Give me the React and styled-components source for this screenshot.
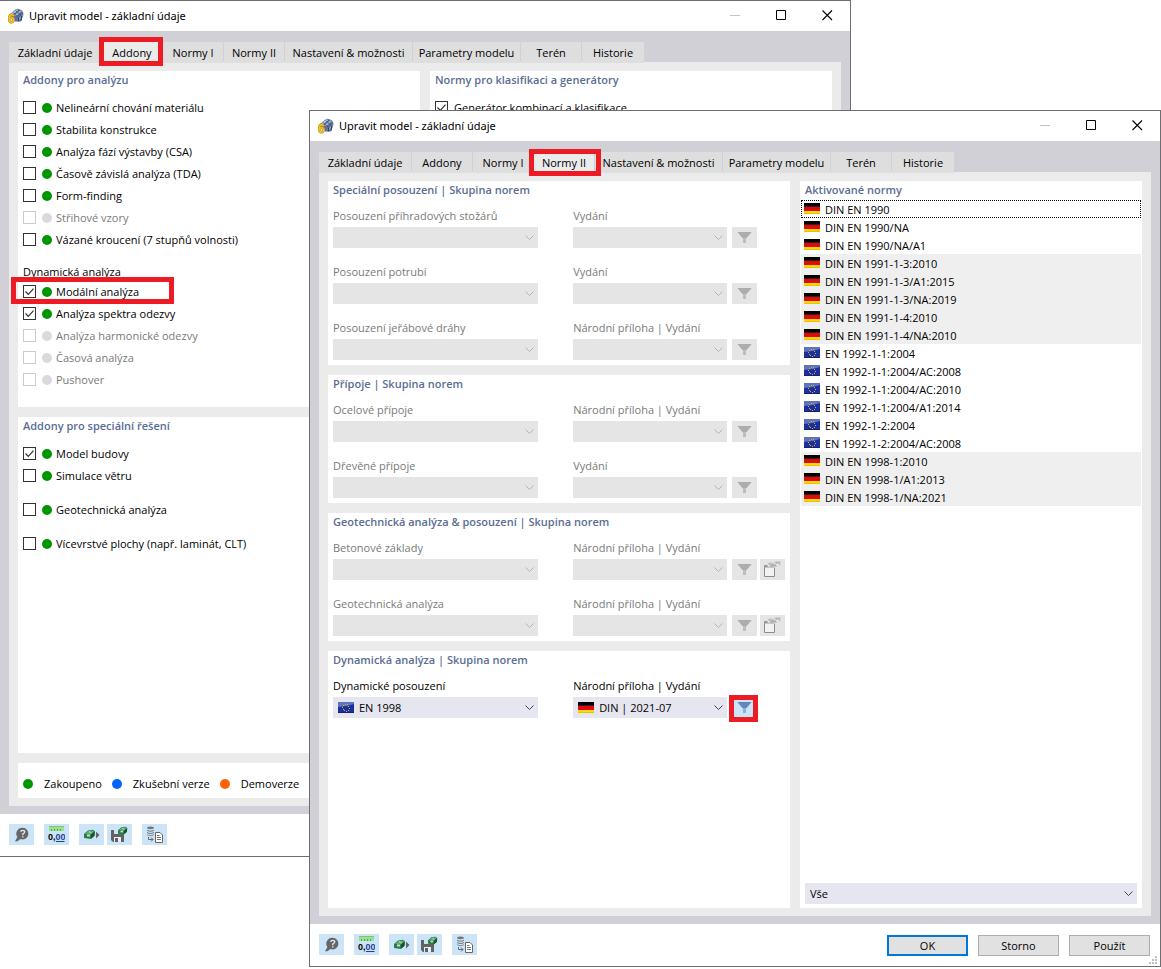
import React, { useId, useState } from 'react';
import styled, { createGlobalStyle, css } from 'styled-components';

const TABS = [
    { name: 'Základní údaje', width: 92 },
    { name: 'Addony', width: 60 },
    { name: 'Normy I', width: 60 },
    { name: 'Normy II', width: 60 },
    { name: 'Nastavení & možnosti', width: 127 },
    { name: 'Parametry modelu', width: 107 },
    { name: 'Terén', width: 60 },
    { name: 'Historie', width: 62 },
];

const NORMS = [
    ['de', 'DIN EN 1990'],
    ['de', 'DIN EN 1990/NA'],
    ['de', 'DIN EN 1990/NA/A1'],
    ['de', 'DIN EN 1991-1-3:2010', true],
    ['de', 'DIN EN 1991-1-3/A1:2015', true],
    ['de', 'DIN EN 1991-1-3/NA:2019', true],
    ['de', 'DIN EN 1991-1-4:2010', true],
    ['de', 'DIN EN 1991-1-4/NA:2010', true],
    ['eu', 'EN 1992-1-1:2004'],
    ['eu', 'EN 1992-1-1:2004/AC:2008'],
    ['eu', 'EN 1992-1-1:2004/AC:2010'],
    ['eu', 'EN 1992-1-1:2004/A1:2014'],
    ['eu', 'EN 1992-1-2:2004'],
    ['eu', 'EN 1992-1-2:2004/AC:2008'],
    ['de', 'DIN EN 1998-1:2010', true],
    ['de', 'DIN EN 1998-1/A1:2013', true],
    ['de', 'DIN EN 1998-1/NA:2021', true],
];

const App = () => (
    <Desktop>
        <GlobalStyle />
        <BackWindow>
            <AddonsDialog />
        </BackWindow>
        <FrontWindow>
            <NormsDialog />
        </FrontWindow>
    </Desktop>
);

const AddonsDialog = () => (
    <>
        <TitleBar />
        <Body>
            <TabBar active="Addony" inset="-5px -1px -3px -3px" />
            <Page $columns="1fr 1fr">
                <Column>
                    <Panel $grow>
                        <PanelTitle>Addony pro analýzu</PanelTitle>
                        <Rows>
                            <Addon label="Nelineární chování materiálu" />
                            <Addon label="Stabilita konstrukce" />
                            <Addon label="Analýza fází výstavby (CSA)" />
                            <Addon label="Časově závislá analýza (TDA)" />
                            <Addon label="Form-finding" />
                            <Addon label="Střihové vzory" disabled />
                            <Addon label="Vázané kroucení (7 stupňů volnosti)" />
                            <GroupLabel>Dynamická analýza</GroupLabel>
                            <Addon label="Modální analýza" checked marked />
                            <Addon label="Analýza spektra odezvy" checked />
                            <Addon label="Analýza harmonické odezvy" disabled />
                            <Addon label="Časová analýza" disabled />
                            <Addon label="Pushover" disabled />
                        </Rows>
                    </Panel>
                    <Panel $grow>
                        <PanelTitle>Addony pro speciální řešení</PanelTitle>
                        <Rows>
                            <Addon label="Model budovy" checked />
                            <Addon label="Simulace větru" />
                            <Addon label="Geotechnická analýza" spaced />
                            <Addon label="Vícevrstvé plochy (např. laminát, CLT)" spaced />
                        </Rows>
                    </Panel>
                    <Legend>
                        <LegendItem><Dot $color="#009600" />Zakoupeno</LegendItem>
                        <LegendItem><Dot $color="#0064ff" />Zkušební verze</LegendItem>
                        <LegendItem><Dot $color="#ff6400" />Demoverze</LegendItem>
                    </Legend>
                </Column>
                <Column>
                    <Panel $grow>
                        <PanelTitle>Normy pro klasifikaci a generátory</PanelTitle>
                        <Rows>
                            <Addon label="Generátor kombinací a klasifikace" checked plain />
                        </Rows>
                    </Panel>
                </Column>
            </Page>
        </Body>
        <Footer>
            <Toolbar />
        </Footer>
    </>
);

const NormsDialog = () => (
    <>
        <TitleBar />
        <Body>
            <TabBar active="Normy II" inset="-3px -7px -3px -5px" />
            <Page $columns="minmax(0, 1fr) 342px">
                <Column>
                    <Panel>
                        <PanelTitle>Speciální posouzení | Skupina norem</PanelTitle>
                        <Fields>
                            <NormField left="Posouzení příhradových stožárů" right="Vydání" disabled />
                            <NormField left="Posouzení potrubí" right="Vydání" disabled />
                            <NormField left="Posouzení jeřábové dráhy" right="Národní příloha | Vydání" disabled />
                        </Fields>
                    </Panel>
                    <Panel>
                        <PanelTitle>Přípoje | Skupina norem</PanelTitle>
                        <Fields>
                            <NormField left="Ocelové přípoje" right="Národní příloha | Vydání" disabled />
                            <NormField left="Dřevěné přípoje" right="Vydání" disabled />
                        </Fields>
                    </Panel>
                    <Panel>
                        <PanelTitle>Geotechnická analýza & posouzení | Skupina norem</PanelTitle>
                        <Fields>
                            <NormField left="Betonové základy" right="Národní příloha | Vydání" disabled library />
                            <NormField left="Geotechnická analýza" right="Národní příloha | Vydání" disabled library />
                        </Fields>
                    </Panel>
                    <Panel $grow>
                        <PanelTitle>Dynamická analýza | Skupina norem</PanelTitle>
                        <Fields>
                            <NormField
                                left="Dynamické posouzení"
                                right="Národní příloha | Vydání"
                                leftValue="EN 1998"
                                rightValue="DIN | 2021-07"
                            />
                        </Fields>
                    </Panel>
                </Column>
                <Panel>
                    <PanelTitle>Aktivované normy</PanelTitle>
                    <NormList>
                        {NORMS.map(([flag, name, shaded], i) => (
                            <NormItem key={name} $shaded={shaded} $focused={i === 0}>
                                <Flag code={flag} />
                                <NormName>{name}</NormName>
                            </NormItem>
                        ))}
                    </NormList>
                    <ListFilter>
                        <Dropdown value="Vše" label="Filtr norem" />
                    </ListFilter>
                </Panel>
            </Page>
        </Body>
        <Footer>
            <Toolbar />
            <Actions>
                <ActionButton $primary>OK</ActionButton>
                <ActionButton>Storno</ActionButton>
                <ActionButton>Použít</ActionButton>
            </Actions>
            <Grip viewBox="0 0 8 8">
                <path d="M6 0h2v2h-2zM3 3h2v2h-2zM6 3h2v2h-2zM0 6h2v2h-2zM3 6h2v2h-2zM6 6h2v2h-2z" />
            </Grip>
        </Footer>
    </>
);

const TitleBar = () => (
    <Title>
        <AppIcon />
        <TitleText>Upravit model - základní údaje</TitleText>
        <WindowButton aria-label="Minimalizovat">
            <svg width="11" height="11"><path d="M0 5.5h10" stroke="#c4c4c4" /></svg>
        </WindowButton>
        <WindowButton aria-label="Maximalizovat">
            <svg width="11" height="11"><path d="M.5 .5h9v9h-9z" fill="none" stroke="#000" /></svg>
        </WindowButton>
        <WindowButton aria-label="Zavřít">
            <svg width="11" height="11"><path d="M.5 .5l9.500 9.500M10 .5l-9.500 9.500" stroke="#000" strokeWidth="1.100" /></svg>
        </WindowButton>
    </Title>
);

const TabBar = ({ active, inset }) => (
    <TabList role="tablist">
        {TABS.map(({ name, width }) => (
            <Tab
                key={name}
                role="tab"
                aria-selected={name === active}
                $active={name === active}
                $width={width}
            >
                {name}
                {name === active && <Marker $inset={inset} />}
            </Tab>
        ))}
    </TabList>
);

const Addon = ({ label, checked = false, disabled, plain, spaced, marked }) => {
    const [on, setOn] = useState(checked);

    return (
        <AddonRow $disabled={disabled} $spaced={spaced}>
            <CheckWrapper>
                <Checkbox type="checkbox" checked={on} disabled={disabled} onChange={() => setOn(!on)} />
                {on && (
                    <CheckMark viewBox="0 0 13 13">
                        <path d="M2.500 6.500l2.800 2.800 5.200-5.600" />
                    </CheckMark>
                )}
            </CheckWrapper>
            {!plain && <Dot $color={disabled ? '#dadade' : '#009600'} />}
            {label}
            {marked && <Marker $inset="-4px auto -1px -12px" $width="163px" />}
        </AddonRow>
    );
};

const NormField = ({ left, right, leftValue, rightValue, disabled, library }) => {
    const id = useId();

    return (
        <FieldGrid>
            <FieldLabel htmlFor={`${id}-norm`} $disabled={disabled}>{left}</FieldLabel>
            <EditionLabel htmlFor={`${id}-edition`} $disabled={disabled}>{right}</EditionLabel>
            <Dropdown id={`${id}-norm`} value={leftValue} flag={leftValue && 'eu'} disabled={disabled} />
            <Edition>
                <Dropdown id={`${id}-edition`} value={rightValue} flag={rightValue && 'de'} disabled={disabled} />
            </Edition>
            <FieldButtons>
                <IconButton aria-label="Filtr" disabled={disabled}>
                    <FilterIcon disabled={disabled} />
                    {!disabled && <Marker $inset="-2px -1px -4px -3px" />}
                </IconButton>
                {library && (
                    <IconButton aria-label="Knihovna" disabled={disabled}>
                        <LibraryIcon />
                    </IconButton>
                )}
            </FieldButtons>
        </FieldGrid>
    );
};

const Dropdown = ({ id, value = '', flag, disabled, label }) => (
    <SelectWrapper>
        <Select id={id} aria-label={label} disabled={disabled} $flag={flag}>
            <option>{value}</option>
        </Select>
        {flag && <SelectFlag><Flag code={flag} /></SelectFlag>}
        <Chevron viewBox="0 0 9 6" $disabled={disabled}>
            <path d="M.5 .5l4 4 4-4" />
        </Chevron>
    </SelectWrapper>
);

const Toolbar = () => (
    <Tools>
        <ToolButton aria-label="Nápověda"><HelpIcon /></ToolButton>
        <ToolButton aria-label="Jednotky" $spaced><UnitsIcon /></ToolButton>
        <ToolButton aria-label="Načíst výchozí" $spaced><LoadIcon /></ToolButton>
        <ToolButton aria-label="Uložit výchozí"><SaveIcon /></ToolButton>
        <ToolButton aria-label="Zkopírovat data" $spaced><CopyIcon /></ToolButton>
    </Tools>
);

const AppIcon = () => (
    <svg width="16" height="16" viewBox="0 0 16 16">
        <path d="M2 6L7.500 1.500Q9 .5 11 1L14 2.500Q16 4.500 15.200 8l-2.500 5.500H7z" fill="#5a7196" />
        <path d="M2.500 6l6-4.500 2.500.3-5.500 4.700z" fill="#b9cbe2" />
        <path d="M6.500 7l6-4.800 1.700 1.300-5.700 5z" fill="#9db4d3" />
        <path d="M9 10.500l5.500-4.800.3 2.300-4.300 5z" fill="#88a0c4" />
        <path d="M5.500 6.500L11 2M8.500 8.500l5.700-5M9.500 10.500l5.200-4.700M7.500 2.500l6 5M5 4.500l5.500 5" fill="none" stroke="#3a4c6d" strokeWidth=".7" />
        <path d="M10.500 10v3.500M13.500 8v4.500" stroke="#33435f" />
        <ModelBadge x="0" y="14.500">6</ModelBadge>
    </svg>
);

const Flag = ({ code }) => (code === 'de' ? (
    <FlagImage viewBox="0 0 16 12">
        <path d="M0 0h16v4H0z" fill="#000" />
        <path d="M0 3h16v1H0z" fill="#3a1a1a" />
        <path d="M0 4h16v4H0z" fill="#dd0b0b" />
        <path d="M0 8h16v3H0z" fill="#ffd90f" />
        <path d="M0 10h16v1H0z" fill="#e8c200" />
    </FlagImage>
) : (
    <FlagImage viewBox="0 0 16 12">
        <path d="M0 0h16v11H0z" fill="#1d2f9c" />
        <path d="M0 0h16v2q-8 3-16 3z" fill="#6073bd" />
        <path d="M0 10h16v1H0z" fill="#15226f" />
        <path d="M7 2h1v1H7zM9 2h1v1H9zM5 3h1v1H5zM10 4h1v1h-1zM4 5h1v1H4zM11 6h1v1h-1zM5 7h1v1H5zM10 8h1v1h-1zM6 8h1v1H6zM8 9h1v1H8z" fill="#c6b440" />
    </FlagImage>
));

const FilterIcon = ({ disabled }) => (
    <svg width="15" height="13" viewBox="0 0 15 13">
        <path d="M.5 1h14L9 7.500V12H6V7.500z" fill={disabled ? '#bdbdbd' : '#8fb0d9'} />
        <path d="M.5 1h14l-5 6h-4z" fill={disabled ? '#adadad' : '#6486ba'} />
    </svg>
);

const LibraryIcon = () => (
    <svg width="17" height="17" viewBox="0 0 17 17">
        <path d="M.5 4.500h10v11H.5z" fill="#f2f2f2" stroke="#8c8c8c" />
        <path d="M0 4h11v2.500H0z" fill="#9b9b9b" />
        <path d="M3 4l3-3 3 .5L11 .5 16.500 0v4l-4 .5-2 2.500-3-1-3 1z" fill="#c9c9c9" />
        <path d="M4.500 2.500l3 2.500 2-3M7.500 6l2-2 3 1M12 2h4" fill="none" stroke="#989898" strokeWidth=".8" />
        <path d="M8.500 1.500l2 1M4 5l2-1M12 3.500l3-.5" stroke="#f6f6f6" />
    </svg>
);

const HelpIcon = () => (
    <svg width="16" height="16" viewBox="0 0 16 16">
        <path d="M8.700 .8a5.800 5.800 0 1 1-2.200 11.200L3.500 14.200H1l2.400-4.200A5.800 5.800 0 0 1 8.700 .8z" fill="#666" />
        <path d="M6.700 4.900Q7 3.300 8.800 3.400q2 .1 1.900 1.600-.1 1-1.900 2v1.200M8.800 9.200v1.300" fill="none" stroke="#dcebf8" strokeWidth="1.400" />
    </svg>
);

const UnitsIcon = () => (
    <svg width="17" height="17" viewBox="0 0 17 17">
        <path d="M1 0h15v5H1z" fill="#9be08d" />
        <path d="M1 .5h15" stroke="#7bc96d" />
        <path d="M3.500 3v2M6.500 3v2M9.500 3v2M12.500 3v2" stroke="#55a44a" />
        <UnitsText x="0" y="14">0,<tspan fill="#27408f">00</tspan></UnitsText>
        <path d="M8 15.500h8.500" stroke="#27408f" />
    </svg>
);

const Cube = () => (
    <>
        <path d="M0 5L4 1.500 9 .8l2 1.700-.5 4.500L7 10 0 9z" fill="#2c7a45" />
        <path d="M1 5l3.500-3L9 1.500l1 1L7 5.500z" fill="#5fae74" />
        <path d="M7 5.500l3.500-3v4L7 9.500z" fill="#1d4f34" />
        <path d="M3 5.500h3v2H3z" fill="#bfe0ca" />
        <path d="M5 2.500l2.500 1.500" stroke="#d5efdc" strokeWidth=".8" />
    </>
);

const LoadIcon = () => (
    <svg width="16" height="16" viewBox="0 0 16 16">
        <g transform="translate(0 2)"><Cube /></g>
        <path d="M12 4.500l3.500 3.500-3.500 3.500z" fill="#666" />
    </svg>
);

const SaveIcon = () => (
    <svg width="17" height="17" viewBox="0 0 17 17">
        <path d="M0 4h10v3h3v9H2l-2-2z" fill="#626262" />
        <path d="M3 4h6v4H3z" fill="#cde4f7" />
        <path d="M3 11h7v5H3z" fill="#e4eff8" />
        <path d="M4 12h3v4H4z" fill="#626262" />
        <g transform="translate(7 0) scale(.85)"><Cube /></g>
    </svg>
);

const CopyIcon = () => (
    <svg width="17" height="17" viewBox="0 0 17 17">
        <path d="M1 1.500q3.500-2.200 7 0v.8q-3.500 2-7 0zM1 3.700q3.500 2 7 0v1q-3.500 2-7 0zM1 6q3.500 2 7 0v1q-3.500 2-7 0zM1 8.300q3.500 2 7 0v.7q-3.500 2-7 0z" fill="#757575" />
        <path d="M2.500 11v2.500H7M5 11.500l2 2-2 2" fill="none" stroke="#666" />
        <path d="M9.500 6.500h4.500l2.500 2.500v7.500h-7z" fill="#fff" stroke="#666" />
        <path d="M11 9.500h2.500M11 11.500h4M11 13.500h4" stroke="#777" />
    </svg>
);

const GlobalStyle = createGlobalStyle`
    *, *::before, *::after {
        box-sizing: border-box;
    }

    body {
        margin: 0;
        background-color: #fff;
        color: #000;
        font: 11px/18px "Open Sans", "Noto Sans", sans-serif;
    }

    button, input, select {
        margin: 0;
        padding: 0;
        border: none;
        color: inherit;
        font: inherit;
    }

    svg {
        flex-shrink: 0;
        display: block;
    }
`;

const Desktop = styled.main`
    position: relative;
    min-height: max(100vh, 860px);
    overflow: hidden;
`;

const Window = styled.section`
    position: absolute;
    display: flex;
    flex-direction: column;
    border: 1px solid #6e6e72;
    background-color: #fff;
`;

const BackWindow = styled(Window)`
    inset: 0 310px 112px -1px;
`;

const FrontWindow = styled(Window)`
    inset: 110px 0 2px 309px;
`;

const Title = styled.header`
    display: flex;
    align-items: center;
    height: 30px;
    padding-left: 8px;
`;

const TitleText = styled.h1`
    flex: 1;
    margin: 0;
    padding-left: 5px;
    font-family: "Noto Sans", "Open Sans", sans-serif;
    font-size: 11px;
    font-weight: 400;
`;

const WindowButton = styled.button`
    display: flex;
    justify-content: center;
    align-items: center;
    width: 46px;
    height: 28px;
    padding-bottom: 1px;
    background: none;
`;

const Body = styled.div`
    flex: 1;
    display: flex;
    flex-direction: column;
    padding: 11px 9px 8px;
    background-color: #d0d0d6;
`;

const TabList = styled.div`
    display: flex;
    gap: 1px;
    height: 20px;
`;

const Tab = styled.button`
    position: relative;
    width: ${(p) => p.$width}px;
    height: 21px;
    background-color: ${(p) => (p.$active ? '#ebebeb' : '#dedede')};
    white-space: nowrap;
`;

/* red frame drawn over the thing it points at */
const Marker = styled.span`
    position: absolute;
    inset: ${(p) => p.$inset};
    width: ${(p) => p.$width};
    z-index: 1;
    border: 5px solid #ed1c24;
    pointer-events: none;
`;

const Page = styled.div`
    flex: 1;
    display: grid;
    grid-template-columns: ${(p) => p.$columns};
    gap: 10px;
    padding: 9px 9px 8px;
    background-color: #ebebeb;
`;

const Column = styled.div`
    display: flex;
    flex-direction: column;
    gap: 10px;
`;

const Panel = styled.section`
    display: flex;
    flex-direction: column;
    flex: ${(p) => (p.$grow ? '1 1 0' : 'none')};
    background-color: #fff;
`;

const PanelTitle = styled.h2`
    margin: 0;
    padding: 0 5px 2px;
    color: #5b6d94;
    font-size: 11px;
    font-weight: 600;
    line-height: 17px;
`;

const Rows = styled.div`
    padding: 7px 5px 0;
`;

const AddonRow = styled.label`
    position: relative;
    display: flex;
    align-items: center;
    gap: 4px;
    height: 22px;
    margin-top: ${(p) => (p.$spaced ? '12px' : '0')};
    color: ${(p) => (p.$disabled ? '#7a7a7a' : '#000')};
`;

const GroupLabel = styled.p`
    margin: 12px 0 0;
`;

const CheckWrapper = styled.span`
    position: relative;
    width: 13px;
    height: 13px;
    margin: 0 2px 1px 0;
`;

const Checkbox = styled.input`
    appearance: none;
    display: block;
    width: 13px;
    height: 13px;
    border: 1px solid #333;
    background-color: #fff;

    &:disabled {
        border-color: #ccc;
    }
`;

const CheckMark = styled.svg`
    position: absolute;
    inset: 0;
    fill: none;
    stroke: #333;
    stroke-width: 1.2;
    pointer-events: none;
`;

const Dot = styled.span`
    flex-shrink: 0;
    width: 10px;
    height: 10px;
    border-radius: 50%;
    background-color: ${(p) => p.$color};
`;

const Legend = styled(Panel)`
    flex-direction: row;
    align-items: center;
    gap: 10px;
    height: 35px;
    padding: 6px 5px 0;
`;

const LegendItem = styled.span`
    display: flex;
    align-items: center;
    gap: 11px;
    white-space: nowrap;
`;

const Fields = styled.div`
    display: flex;
    flex-direction: column;
    gap: 15px;
    padding: 7px 5px 5px;
`;

const FieldGrid = styled.div`
    display: grid;
    grid-template-columns: minmax(0, 4fr) 35px minmax(0, 3fr) 58px;
    row-gap: 2px;
`;

const FieldLabel = styled.label`
    color: ${(p) => (p.$disabled ? '#7a7a7a' : '#000')};
    white-space: nowrap;
`;

const EditionLabel = styled(FieldLabel)`
    grid-column: 3 / 5;
`;

const Edition = styled.div`
    grid-column: 3;
`;

const FieldButtons = styled.div`
    display: flex;
    gap: 3px;
    padding-left: 5px;
`;

const SelectWrapper = styled.div`
    position: relative;
`;

const Select = styled.select`
    appearance: none;
    display: block;
    width: 100%;
    height: 21px;
    padding: 0 20px 0 ${(p) => (p.$flag ? '26px' : '5px')};
    border-radius: 0;
    background-color: #e6e6f1;

    &:disabled {
        background-color: #e5e5e5;
        opacity: 1;
    }
`;

const SelectFlag = styled.span`
    position: absolute;
    top: 5px;
    left: 5px;
    pointer-events: none;
`;

const Chevron = styled.svg`
    position: absolute;
    top: 8px;
    right: 4px;
    width: 9px;
    height: 6px;
    fill: none;
    stroke: ${(p) => (p.$disabled ? '#b4b4b4' : '#444')};
    pointer-events: none;
`;

const IconButton = styled.button`
    position: relative;
    display: flex;
    justify-content: center;
    align-items: center;
    width: 25px;
    height: 21px;
    background-color: #cce4f7;

    &:disabled {
        background-color: #e5e5e5;
    }
`;

const FlagImage = styled.svg`
    width: 16px;
    height: 12px;
`;

const NormList = styled.ul`
    flex: 1;
    margin: 0;
    padding: 0 1px;
    list-style: none;
`;

const NormItem = styled.li`
    display: flex;
    align-items: center;
    gap: 5px;
    height: 18px;
    padding-left: 3px;
    background-color: ${(p) => (p.$shaded ? '#efefef' : '#fff')};
    ${(p) => p.$focused && css`
        outline: 1px dotted #000;
        outline-offset: -1px;
    `}
`;

const NormName = styled.span`
    padding-top: 2px;
`;

const ListFilter = styled.div`
    padding: 0 5px 4px;
`;

const Footer = styled.footer`
    position: relative;
    display: flex;
    justify-content: space-between;
    align-items: flex-start;
    min-height: 42px;
    padding: 10px 10px 10px 9px;
`;

const Tools = styled.div`
    display: flex;
    gap: 3px;
`;

const ToolButton = styled(IconButton)`
    margin-left: ${(p) => (p.$spaced ? '7px' : '0')};
`;

const ModelBadge = styled.text`
    font: 700 12px "Liberation Sans", sans-serif;
    fill: #f3c21c;
    stroke: #a67c12;
    stroke-width: 1;
    paint-order: stroke;
`;

const UnitsText = styled.text`
    font: 700 9px "Liberation Sans", sans-serif;
`;

const Actions = styled.div`
    display: flex;
    gap: 10px;
    padding-top: 1px;
`;

const ActionButton = styled.button`
    width: 81px;
    height: 21px;
    border: ${(p) => (p.$primary ? '2px solid #0078d7' : '1px solid #adadad')};
    background-color: #e1e1e1;
    line-height: 17px;
`;

const Grip = styled.svg`
    position: absolute;
    right: 3px;
    bottom: 2px;
    width: 8px;
    height: 8px;
    fill: #bfbfbf;
`;

export default App;
